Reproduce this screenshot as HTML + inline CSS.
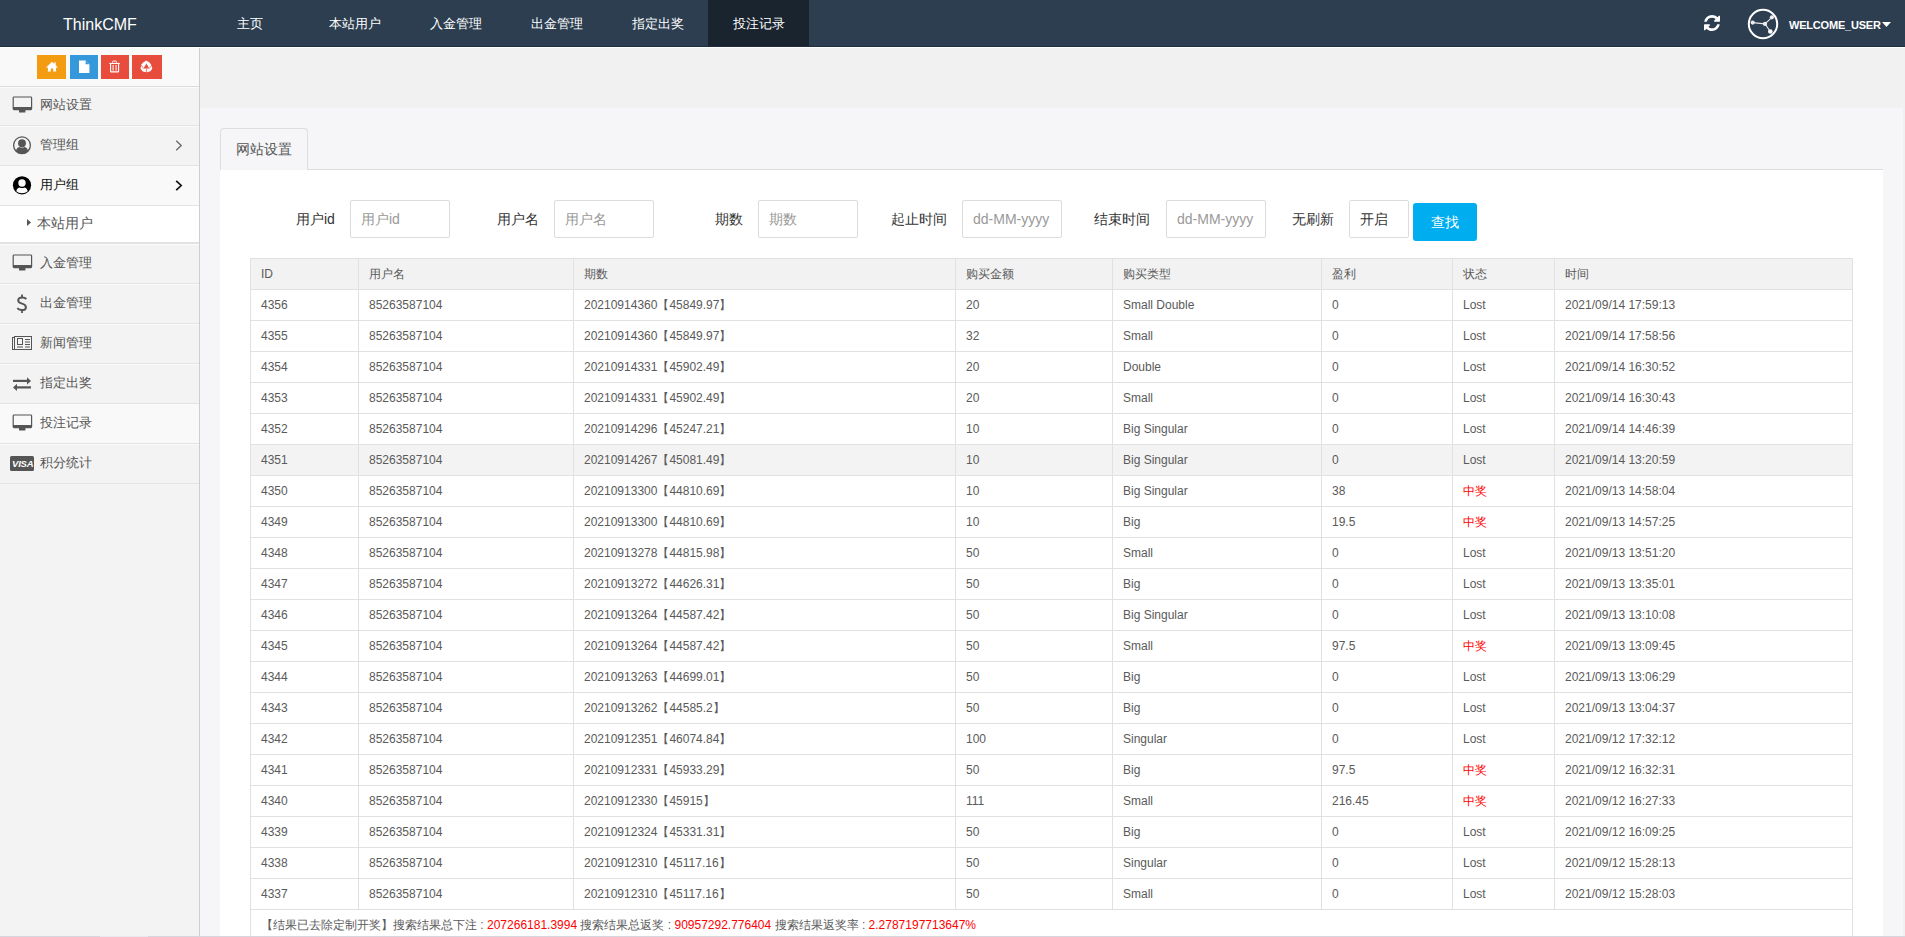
<!DOCTYPE html>
<html><head><meta charset="utf-8">
<style>
*{box-sizing:border-box}
html,body{margin:0;padding:0;width:1905px;height:937px;overflow:hidden;background:#f1f1f1;font-family:"Liberation Sans",sans-serif}
div,span,svg{position:absolute}
#nav{left:0;top:0;width:1905px;height:47px;background:#2c3e50;border-bottom:1px solid #1f2d3e}
.brand{left:63px;top:15px;font-size:16px;color:#fff;line-height:20px;white-space:nowrap}
.ni{top:0;height:46px;line-height:47px;color:#fff;font-size:13px;white-space:nowrap}
#side{left:0;top:48px;width:199px;height:888px;background:#f3f3f3}
.mi{left:0;width:199px;height:40px;border-bottom:1px solid #e2e2e2;background:#f3f3f3}
.mt{left:40px;top:11px;font-size:13px;line-height:16px;color:#555;white-space:nowrap}
.sb{top:55px;height:24px}
.c{font-size:12px;line-height:14px;color:#5a5a5a;white-space:nowrap}
.hl{height:1px;background:#e1e1e1}
.vl{width:1px;background:#e1e1e1}
.lab{font-size:14px;line-height:16px;color:#333;white-space:nowrap}
.inp{top:200px;height:38px;border:1px solid #dcdcdc;border-radius:2px;background:#fff}
.ph{font-size:14px;line-height:16px;color:#999;white-space:nowrap;top:10px;left:10px}
</style></head><body>

<div id="nav">
<div style="left:708px;top:0;width:101px;height:46px;background:#1a242f"></div>
<div class="brand">ThinkCMF</div>
<div class="ni" style="left:237px">主页</div>
<div class="ni" style="left:329px">本站用户</div>
<div class="ni" style="left:430px">入金管理</div>
<div class="ni" style="left:531px">出金管理</div>
<div class="ni" style="left:632px">指定出奖</div>
<div class="ni" style="left:733px">投注记录</div>
<svg style="left:1703.5px;top:14.5px" width="16" height="16" viewBox="0 0 1536 1536"><path fill="#fff" d="M1511 928q0 5-1 7-64 268-268 434.5T764 1536q-146 0-282.5-55T238 1324l-129 128q-19 19-45 19t-45-19-19-45V960q0-26 19-45t45-19h448q26 0 45 19t19 45-19 45l-137 137q71 66 161 102t187 36q134 0 250-65t186-179q11-17 53-117 8-23 30-23h192q13 0 22.5 9.5t9.5 22.5zm25-800v448q0 26-19 45t-45 19h-448q-26 0-45-19t-19-45 19-45l138-138Q969 256 768 256q-134 0-250 65T332 500q-11 17-53 117-8 23-30 23H50q-13 0-22.5-9.5T18 608v-7q65-268 270-434.5T768 0q146 0 284 55.5T1297 212l130-129q19-19 45-19t45 19 19 45z"/></svg>
<svg style="left:1747px;top:8px" width="32" height="32" viewBox="0 0 32 32"><circle cx="16" cy="16" r="14.2" fill="none" stroke="#fff" stroke-width="2"/><path d="M5.7 14.6L18 15.9L24.9 9.3M18 15.9L23.3 23.5" stroke="#e8e8e8" stroke-width="1.1" fill="none"/><circle cx="5.7" cy="14.6" r="2.1" fill="#eee"/><circle cx="18" cy="15.9" r="2.1" fill="#eee"/><circle cx="24.9" cy="9.3" r="2.1" fill="#eee"/><circle cx="23.3" cy="23.5" r="2.3" fill="#fff"/></svg>
<div style="left:1789px;top:19px;font-size:11px;line-height:12px;color:#fff;font-weight:bold;white-space:nowrap;letter-spacing:-0.2px">WELCOME_USER</div>
<svg style="left:1882px;top:22px" width="9" height="5" viewBox="0 0 9 5"><path d="M0 0H9L4.5 5z" fill="#fff"/></svg>
</div>
<div style="left:0;top:47px;width:1905px;height:1px;background:#fff"></div>
<div id="side">
<div style="left:0;top:0;width:199px;height:39px;background:#f9f9f9;border-bottom:1px solid #e2e2e2"></div>
</div>
<div style="left:199px;top:48px;width:1px;height:888px;background:#cdcdcd"></div>
<div class="sb" style="left:37px;width:29px;background:#f39c12"></div>
<div class="sb" style="left:70px;width:28px;background:#3498db"></div>
<div class="sb" style="left:101px;width:28px;background:#e74c3c"></div>
<div class="sb" style="left:132px;width:30px;background:#e74c3c"></div>
<svg style="left:46px;top:61px" width="12" height="11" viewBox="0 0 12 11"><path d="M6 0.8L0.3 6.2L1 6.9L1.9 6V10.4H4.8V7.6H7.2V10.4H10.1V6L11 6.9L11.7 6.2L9.7 4.3V1.2H8.3V3L6 0.8z" fill="#fff"/></svg>
<svg style="left:78px;top:60px" width="12" height="14" viewBox="0 0 12 14"><path d="M1 0.6H7.6L11.4 4.3V13H1z" fill="#fff"/><path d="M7.6 0.6V4.3H11.4" fill="#3498db"/></svg>
<svg style="left:109px;top:60px" width="12" height="13" viewBox="0 0 12 13"><path d="M3.6 2.6V1.9Q3.6 1 4.5 1H6.6Q7.5 1 7.5 1.9V2.6" fill="none" stroke="#fff" stroke-width="1"/><path d="M0.4 2.9H10.8V4H0.4z" fill="#fff"/><path d="M1.6 4V11.4Q1.6 11.9 2.1 11.9H9.1Q9.6 11.9 9.6 11.4V4" fill="none" stroke="#fff" stroke-width="1.1"/><path d="M4.1 5V10.6M7.1 5V10.6" stroke="#fff" stroke-width="1"/></svg>
<svg style="left:140px;top:60px" width="13" height="13" viewBox="0 0 13 13"><path d="M6.3 0.5L9.6 2.4L11.6 5.6L12.3 8.4L10.4 11.2L6.8 12.3L2.8 11.6L0.6 8.8L1.2 4.6L3.4 2.2z M6.4 3.6L3.5 8.6H9.3z" fill="#fff" fill-rule="evenodd"/><path d="M6.4 8.6V12.4M3.5 8.6L1 5M9.3 8.6L11.9 5" stroke="#e74c3c" stroke-width="0.7"/></svg>
<div style="left:0;top:86px;width:199px;height:1px;background:#dcdcdc"></div>
<div style="left:0;top:87px;width:199px;height:39px;background:#f3f3f3;border-top:1px solid #fafafa;border-bottom:1px solid #e3e3e3"></div>
<div class="mt" style="top:97px;color:#555">网站设置</div>
<div style="left:0;top:126px;width:199px;height:40px;background:#f3f3f3;border-top:1px solid #fafafa;border-bottom:1px solid #e3e3e3"></div>
<div class="mt" style="top:137px;color:#555">管理组</div>
<div style="left:0;top:166px;width:199px;height:40px;background:#f9f9f9;border-top:1px solid #fafafa;border-bottom:1px solid #e3e3e3"></div>
<div class="mt" style="top:177px;color:#111">用户组</div>
<div style="left:0;top:244px;width:199px;height:40px;background:#f3f3f3;border-top:1px solid #fafafa;border-bottom:1px solid #e3e3e3"></div>
<div class="mt" style="top:255px;color:#555">入金管理</div>
<div style="left:0;top:284px;width:199px;height:40px;background:#f3f3f3;border-top:1px solid #fafafa;border-bottom:1px solid #e3e3e3"></div>
<div class="mt" style="top:295px;color:#555">出金管理</div>
<div style="left:0;top:324px;width:199px;height:40px;background:#f3f3f3;border-top:1px solid #fafafa;border-bottom:1px solid #e3e3e3"></div>
<div class="mt" style="top:335px;color:#555">新闻管理</div>
<div style="left:0;top:364px;width:199px;height:40px;background:#f3f3f3;border-top:1px solid #fafafa;border-bottom:1px solid #e3e3e3"></div>
<div class="mt" style="top:375px;color:#555">指定出奖</div>
<div style="left:0;top:404px;width:199px;height:40px;background:#f9f9f9;border-top:1px solid #fafafa;border-bottom:1px solid #e3e3e3"></div>
<div class="mt" style="top:415px;color:#555">投注记录</div>
<div style="left:0;top:444px;width:199px;height:40px;background:#f3f3f3;border-top:1px solid #fafafa;border-bottom:1px solid #e3e3e3"></div>
<div class="mt" style="top:455px;color:#555">积分统计</div>
<div style="left:0;top:206px;width:199px;height:38px;background:#fff;border-bottom:2px solid #e2e2e2"></div>
<svg style="left:27px;top:219px" width="4" height="7" viewBox="0 0 4 7"><path d="M0 0L4 3.5L0 7z" fill="#555"/></svg>
<div style="left:37px;top:215px;font-size:14px;line-height:16px;color:#555;white-space:nowrap">本站用户</div>
<svg style="left:12px;top:96px" width="21" height="18" viewBox="0 0 21 18"><path d="M2 0.4H18.8Q20.2 0.4 20.2 1.8V12.6Q20.2 14.2 18.8 14.2H2Q0.6 14.2 0.6 12.6V1.8Q0.6 0.4 2 0.4z M1.8 1.6V10.9H19V1.6z" fill="#555" fill-rule="evenodd"/><path d="M7 14H13.4V16.5H7z" fill="#555"/></svg>
<svg style="left:12px;top:254px" width="21" height="18" viewBox="0 0 21 18"><path d="M2 0.4H18.8Q20.2 0.4 20.2 1.8V12.6Q20.2 14.2 18.8 14.2H2Q0.6 14.2 0.6 12.6V1.8Q0.6 0.4 2 0.4z M1.8 1.6V10.9H19V1.6z" fill="#555" fill-rule="evenodd"/><path d="M7 14H13.4V16.5H7z" fill="#555"/></svg>
<svg style="left:12px;top:414px" width="21" height="18" viewBox="0 0 21 18"><path d="M2 0.4H18.8Q20.2 0.4 20.2 1.8V12.6Q20.2 14.2 18.8 14.2H2Q0.6 14.2 0.6 12.6V1.8Q0.6 0.4 2 0.4z M1.8 1.6V10.9H19V1.6z" fill="#555" fill-rule="evenodd"/><path d="M7 14H13.4V16.5H7z" fill="#555"/></svg>
<svg style="left:12px;top:135px" width="20" height="20" viewBox="0 0 20 20"><circle cx="10" cy="10.3" r="8.4" fill="none" stroke="#555" stroke-width="1.3"/><circle cx="10" cy="8.2" r="3.9" fill="#555"/><path d="M3.9 16.2Q4.6 12.2 7.3 11.9Q10 13 12.7 11.9Q15.4 12.2 16.1 16.2Q13.5 18.7 10 18.7Q6.5 18.7 3.9 16.2z" fill="#555"/></svg>
<svg style="left:12px;top:175px" width="20" height="20" viewBox="0 0 20 20"><circle cx="10" cy="10.3" r="9.1" fill="#000"/><circle cx="10" cy="8" r="3.7" fill="#fafafa"/><path d="M4.3 16.3Q4.9 12.8 7.4 12.4Q10 13.6 12.6 12.4Q15.1 12.8 15.7 16.3Q13.5 18.2 10 18.2Q6.5 18.2 4.3 16.3z" fill="#fafafa"/></svg>
<svg style="left:175px;top:140px" width="8" height="11" viewBox="0 0 8 11"><path d="M1.2 0.8L6.2 5.5L1.2 10.2" fill="none" stroke="#666" stroke-width="1.3"/></svg>
<svg style="left:175px;top:180px" width="8" height="11" viewBox="0 0 8 11"><path d="M1.2 0.8L6.2 5.5L1.2 10.2" fill="none" stroke="#111" stroke-width="1.7"/></svg>
<svg style="left:16px;top:294px" width="12" height="20" viewBox="0 0 12 20"><path d="M6 0.4V3.2M6 16.2V19" stroke="#555" stroke-width="1.8"/><path d="M10.3 5Q9 3.4 6.2 3.4Q2.2 3.4 2.2 6.6Q2.2 8.7 6 9.6Q9.9 10.6 9.9 13.2Q9.9 16.1 6 16.1Q3 16.1 1.3 14.2" fill="none" stroke="#555" stroke-width="2"/></svg>
<svg style="left:11px;top:335px" width="22" height="16" viewBox="0 0 22 16" fill="#555"><rect x="3" y="1" width="18" height="1"/><rect x="20" y="1" width="1" height="14"/><rect x="1" y="14" width="20" height="1"/><rect x="3" y="1" width="1" height="14"/><rect x="1" y="2" width="1" height="13"/><rect x="1" y="2" width="2" height="1"/><rect x="6" y="3" width="6" height="1"/><rect x="6" y="9" width="6" height="1"/><rect x="6" y="3" width="1" height="7"/><rect x="11" y="3" width="1" height="7"/><rect x="14" y="4" width="5" height="1"/><rect x="14" y="6.5" width="5" height="1"/><rect x="14" y="9" width="5" height="1"/><rect x="6" y="11.5" width="6" height="1"/><rect x="14" y="11.5" width="5" height="1"/></svg>
<svg style="left:12px;top:376px" width="20" height="16" viewBox="0 0 20 16"><path d="M1 4.9H16" stroke="#555" stroke-width="2.2"/><path d="M15 1.3L19 4.9L15 8.5z" fill="#555"/><path d="M4 11.4H19" stroke="#555" stroke-width="2.2"/><path d="M5 7.8L1 11.4L5 15z" fill="#555"/></svg>
<div style="left:10px;top:456px;width:24px;height:15px;background:#555;border-radius:1.5px"></div>
<div style="left:12px;top:457px;font-size:9.5px;line-height:13px;color:#fff;font-weight:bold;font-style:italic;letter-spacing:-0.2px">VISA</div>
<div style="left:200px;top:108px;width:1703px;height:828px;background:#f6f6f8"></div>
<div style="left:220px;top:128px;width:88px;height:43px;border:1px solid #ddd;border-bottom:none;border-radius:4px 4px 0 0;background:#f6f6f8"></div>
<div style="left:236px;top:141px;font-size:14px;line-height:16px;color:#555;white-space:nowrap">网站设置</div>
<div style="left:307px;top:169px;width:1576px;height:1px;background:#ddd"></div>
<div style="left:220px;top:170px;width:1663px;height:766px;background:#fff"></div>
<div class="lab" style="left:296px;top:211px">用户id</div>
<div class="inp" style="left:350px;width:100px"><div class="ph" style="color:#999">用户id</div></div>
<div class="lab" style="left:497px;top:211px">用户名</div>
<div class="inp" style="left:554px;width:100px"><div class="ph" style="color:#999">用户名</div></div>
<div class="lab" style="left:715px;top:211px">期数</div>
<div class="inp" style="left:758px;width:100px"><div class="ph" style="color:#999">期数</div></div>
<div class="lab" style="left:891px;top:211px">起止时间</div>
<div class="inp" style="left:962px;width:100px"><div class="ph" style="color:#999">dd-MM-yyyy</div></div>
<div class="lab" style="left:1094px;top:211px">结束时间</div>
<div class="inp" style="left:1166px;width:100px"><div class="ph" style="color:#999">dd-MM-yyyy</div></div>
<div class="lab" style="left:1292px;top:211px">无刷新</div>
<div class="inp" style="left:1349px;width:60px"><div class="ph" style="color:#333">开启</div></div>
<div style="left:1413px;top:203px;width:64px;height:38px;background:#00aeef;border-radius:3px"></div>
<div style="left:1431px;top:214px;font-size:14px;line-height:16px;color:#fff;white-space:nowrap">查找</div>
<div style="left:251px;top:259px;width:1601px;height:30px;background:#f2f2f2"></div>
<div style="left:251px;top:445px;width:1601px;height:30px;background:#f3f3f3"></div>
<div class="hl" style="left:250px;top:258px;width:1603px"></div>
<div class="hl" style="left:250px;top:289px;width:1603px"></div>
<div class="hl" style="left:250px;top:320px;width:1603px"></div>
<div class="hl" style="left:250px;top:351px;width:1603px"></div>
<div class="hl" style="left:250px;top:382px;width:1603px"></div>
<div class="hl" style="left:250px;top:413px;width:1603px"></div>
<div class="hl" style="left:250px;top:444px;width:1603px"></div>
<div class="hl" style="left:250px;top:475px;width:1603px"></div>
<div class="hl" style="left:250px;top:506px;width:1603px"></div>
<div class="hl" style="left:250px;top:537px;width:1603px"></div>
<div class="hl" style="left:250px;top:568px;width:1603px"></div>
<div class="hl" style="left:250px;top:599px;width:1603px"></div>
<div class="hl" style="left:250px;top:630px;width:1603px"></div>
<div class="hl" style="left:250px;top:661px;width:1603px"></div>
<div class="hl" style="left:250px;top:692px;width:1603px"></div>
<div class="hl" style="left:250px;top:723px;width:1603px"></div>
<div class="hl" style="left:250px;top:754px;width:1603px"></div>
<div class="hl" style="left:250px;top:785px;width:1603px"></div>
<div class="hl" style="left:250px;top:816px;width:1603px"></div>
<div class="hl" style="left:250px;top:847px;width:1603px"></div>
<div class="hl" style="left:250px;top:878px;width:1603px"></div>
<div class="hl" style="left:250px;top:909px;width:1603px"></div>
<div class="vl" style="left:250px;top:258px;height:679px"></div>
<div class="vl" style="left:358px;top:258px;height:651px"></div>
<div class="vl" style="left:573px;top:258px;height:651px"></div>
<div class="vl" style="left:955px;top:258px;height:651px"></div>
<div class="vl" style="left:1112px;top:258px;height:651px"></div>
<div class="vl" style="left:1321px;top:258px;height:651px"></div>
<div class="vl" style="left:1452px;top:258px;height:651px"></div>
<div class="vl" style="left:1554px;top:258px;height:651px"></div>
<div class="vl" style="left:1852px;top:258px;height:679px"></div>
<div class="c" style="left:261px;top:267px">ID</div>
<div class="c" style="left:369px;top:267px">用户名</div>
<div class="c" style="left:584px;top:267px">期数</div>
<div class="c" style="left:966px;top:267px">购买金额</div>
<div class="c" style="left:1123px;top:267px">购买类型</div>
<div class="c" style="left:1332px;top:267px">盈利</div>
<div class="c" style="left:1463px;top:267px">状态</div>
<div class="c" style="left:1565px;top:267px">时间</div>
<div class="c" style="left:261px;top:298px">4356</div>
<div class="c" style="left:369px;top:298px">85263587104</div>
<div class="c" style="left:584px;top:298px">20210914360【45849.97】</div>
<div class="c" style="left:966px;top:298px">20</div>
<div class="c" style="left:1123px;top:298px">Small Double</div>
<div class="c" style="left:1332px;top:298px">0</div>
<div class="c" style="left:1463px;top:298px">Lost</div>
<div class="c" style="left:1565px;top:298px">2021/09/14 17:59:13</div>
<div class="c" style="left:261px;top:329px">4355</div>
<div class="c" style="left:369px;top:329px">85263587104</div>
<div class="c" style="left:584px;top:329px">20210914360【45849.97】</div>
<div class="c" style="left:966px;top:329px">32</div>
<div class="c" style="left:1123px;top:329px">Small</div>
<div class="c" style="left:1332px;top:329px">0</div>
<div class="c" style="left:1463px;top:329px">Lost</div>
<div class="c" style="left:1565px;top:329px">2021/09/14 17:58:56</div>
<div class="c" style="left:261px;top:360px">4354</div>
<div class="c" style="left:369px;top:360px">85263587104</div>
<div class="c" style="left:584px;top:360px">20210914331【45902.49】</div>
<div class="c" style="left:966px;top:360px">20</div>
<div class="c" style="left:1123px;top:360px">Double</div>
<div class="c" style="left:1332px;top:360px">0</div>
<div class="c" style="left:1463px;top:360px">Lost</div>
<div class="c" style="left:1565px;top:360px">2021/09/14 16:30:52</div>
<div class="c" style="left:261px;top:391px">4353</div>
<div class="c" style="left:369px;top:391px">85263587104</div>
<div class="c" style="left:584px;top:391px">20210914331【45902.49】</div>
<div class="c" style="left:966px;top:391px">20</div>
<div class="c" style="left:1123px;top:391px">Small</div>
<div class="c" style="left:1332px;top:391px">0</div>
<div class="c" style="left:1463px;top:391px">Lost</div>
<div class="c" style="left:1565px;top:391px">2021/09/14 16:30:43</div>
<div class="c" style="left:261px;top:422px">4352</div>
<div class="c" style="left:369px;top:422px">85263587104</div>
<div class="c" style="left:584px;top:422px">20210914296【45247.21】</div>
<div class="c" style="left:966px;top:422px">10</div>
<div class="c" style="left:1123px;top:422px">Big Singular</div>
<div class="c" style="left:1332px;top:422px">0</div>
<div class="c" style="left:1463px;top:422px">Lost</div>
<div class="c" style="left:1565px;top:422px">2021/09/14 14:46:39</div>
<div class="c" style="left:261px;top:453px">4351</div>
<div class="c" style="left:369px;top:453px">85263587104</div>
<div class="c" style="left:584px;top:453px">20210914267【45081.49】</div>
<div class="c" style="left:966px;top:453px">10</div>
<div class="c" style="left:1123px;top:453px">Big Singular</div>
<div class="c" style="left:1332px;top:453px">0</div>
<div class="c" style="left:1463px;top:453px">Lost</div>
<div class="c" style="left:1565px;top:453px">2021/09/14 13:20:59</div>
<div class="c" style="left:261px;top:484px">4350</div>
<div class="c" style="left:369px;top:484px">85263587104</div>
<div class="c" style="left:584px;top:484px">20210913300【44810.69】</div>
<div class="c" style="left:966px;top:484px">10</div>
<div class="c" style="left:1123px;top:484px">Big Singular</div>
<div class="c" style="left:1332px;top:484px">38</div>
<div class="c" style="left:1463px;top:484px;color:#f00">中奖</div>
<div class="c" style="left:1565px;top:484px">2021/09/13 14:58:04</div>
<div class="c" style="left:261px;top:515px">4349</div>
<div class="c" style="left:369px;top:515px">85263587104</div>
<div class="c" style="left:584px;top:515px">20210913300【44810.69】</div>
<div class="c" style="left:966px;top:515px">10</div>
<div class="c" style="left:1123px;top:515px">Big</div>
<div class="c" style="left:1332px;top:515px">19.5</div>
<div class="c" style="left:1463px;top:515px;color:#f00">中奖</div>
<div class="c" style="left:1565px;top:515px">2021/09/13 14:57:25</div>
<div class="c" style="left:261px;top:546px">4348</div>
<div class="c" style="left:369px;top:546px">85263587104</div>
<div class="c" style="left:584px;top:546px">20210913278【44815.98】</div>
<div class="c" style="left:966px;top:546px">50</div>
<div class="c" style="left:1123px;top:546px">Small</div>
<div class="c" style="left:1332px;top:546px">0</div>
<div class="c" style="left:1463px;top:546px">Lost</div>
<div class="c" style="left:1565px;top:546px">2021/09/13 13:51:20</div>
<div class="c" style="left:261px;top:577px">4347</div>
<div class="c" style="left:369px;top:577px">85263587104</div>
<div class="c" style="left:584px;top:577px">20210913272【44626.31】</div>
<div class="c" style="left:966px;top:577px">50</div>
<div class="c" style="left:1123px;top:577px">Big</div>
<div class="c" style="left:1332px;top:577px">0</div>
<div class="c" style="left:1463px;top:577px">Lost</div>
<div class="c" style="left:1565px;top:577px">2021/09/13 13:35:01</div>
<div class="c" style="left:261px;top:608px">4346</div>
<div class="c" style="left:369px;top:608px">85263587104</div>
<div class="c" style="left:584px;top:608px">20210913264【44587.42】</div>
<div class="c" style="left:966px;top:608px">50</div>
<div class="c" style="left:1123px;top:608px">Big Singular</div>
<div class="c" style="left:1332px;top:608px">0</div>
<div class="c" style="left:1463px;top:608px">Lost</div>
<div class="c" style="left:1565px;top:608px">2021/09/13 13:10:08</div>
<div class="c" style="left:261px;top:639px">4345</div>
<div class="c" style="left:369px;top:639px">85263587104</div>
<div class="c" style="left:584px;top:639px">20210913264【44587.42】</div>
<div class="c" style="left:966px;top:639px">50</div>
<div class="c" style="left:1123px;top:639px">Small</div>
<div class="c" style="left:1332px;top:639px">97.5</div>
<div class="c" style="left:1463px;top:639px;color:#f00">中奖</div>
<div class="c" style="left:1565px;top:639px">2021/09/13 13:09:45</div>
<div class="c" style="left:261px;top:670px">4344</div>
<div class="c" style="left:369px;top:670px">85263587104</div>
<div class="c" style="left:584px;top:670px">20210913263【44699.01】</div>
<div class="c" style="left:966px;top:670px">50</div>
<div class="c" style="left:1123px;top:670px">Big</div>
<div class="c" style="left:1332px;top:670px">0</div>
<div class="c" style="left:1463px;top:670px">Lost</div>
<div class="c" style="left:1565px;top:670px">2021/09/13 13:06:29</div>
<div class="c" style="left:261px;top:701px">4343</div>
<div class="c" style="left:369px;top:701px">85263587104</div>
<div class="c" style="left:584px;top:701px">20210913262【44585.2】</div>
<div class="c" style="left:966px;top:701px">50</div>
<div class="c" style="left:1123px;top:701px">Big</div>
<div class="c" style="left:1332px;top:701px">0</div>
<div class="c" style="left:1463px;top:701px">Lost</div>
<div class="c" style="left:1565px;top:701px">2021/09/13 13:04:37</div>
<div class="c" style="left:261px;top:732px">4342</div>
<div class="c" style="left:369px;top:732px">85263587104</div>
<div class="c" style="left:584px;top:732px">20210912351【46074.84】</div>
<div class="c" style="left:966px;top:732px">100</div>
<div class="c" style="left:1123px;top:732px">Singular</div>
<div class="c" style="left:1332px;top:732px">0</div>
<div class="c" style="left:1463px;top:732px">Lost</div>
<div class="c" style="left:1565px;top:732px">2021/09/12 17:32:12</div>
<div class="c" style="left:261px;top:763px">4341</div>
<div class="c" style="left:369px;top:763px">85263587104</div>
<div class="c" style="left:584px;top:763px">20210912331【45933.29】</div>
<div class="c" style="left:966px;top:763px">50</div>
<div class="c" style="left:1123px;top:763px">Big</div>
<div class="c" style="left:1332px;top:763px">97.5</div>
<div class="c" style="left:1463px;top:763px;color:#f00">中奖</div>
<div class="c" style="left:1565px;top:763px">2021/09/12 16:32:31</div>
<div class="c" style="left:261px;top:794px">4340</div>
<div class="c" style="left:369px;top:794px">85263587104</div>
<div class="c" style="left:584px;top:794px">20210912330【45915】</div>
<div class="c" style="left:966px;top:794px">111</div>
<div class="c" style="left:1123px;top:794px">Small</div>
<div class="c" style="left:1332px;top:794px">216.45</div>
<div class="c" style="left:1463px;top:794px;color:#f00">中奖</div>
<div class="c" style="left:1565px;top:794px">2021/09/12 16:27:33</div>
<div class="c" style="left:261px;top:825px">4339</div>
<div class="c" style="left:369px;top:825px">85263587104</div>
<div class="c" style="left:584px;top:825px">20210912324【45331.31】</div>
<div class="c" style="left:966px;top:825px">50</div>
<div class="c" style="left:1123px;top:825px">Big</div>
<div class="c" style="left:1332px;top:825px">0</div>
<div class="c" style="left:1463px;top:825px">Lost</div>
<div class="c" style="left:1565px;top:825px">2021/09/12 16:09:25</div>
<div class="c" style="left:261px;top:856px">4338</div>
<div class="c" style="left:369px;top:856px">85263587104</div>
<div class="c" style="left:584px;top:856px">20210912310【45117.16】</div>
<div class="c" style="left:966px;top:856px">50</div>
<div class="c" style="left:1123px;top:856px">Singular</div>
<div class="c" style="left:1332px;top:856px">0</div>
<div class="c" style="left:1463px;top:856px">Lost</div>
<div class="c" style="left:1565px;top:856px">2021/09/12 15:28:13</div>
<div class="c" style="left:261px;top:887px">4337</div>
<div class="c" style="left:369px;top:887px">85263587104</div>
<div class="c" style="left:584px;top:887px">20210912310【45117.16】</div>
<div class="c" style="left:966px;top:887px">50</div>
<div class="c" style="left:1123px;top:887px">Small</div>
<div class="c" style="left:1332px;top:887px">0</div>
<div class="c" style="left:1463px;top:887px">Lost</div>
<div class="c" style="left:1565px;top:887px">2021/09/12 15:28:03</div>
<div class="c" style="left:261px;top:918px">【结果已去除定制开奖】搜索结果总下注 : <span style="position:static;color:#f00">207266181.3994</span> 搜索结果总返奖 : <span style="position:static;color:#f00">90957292.776404</span> 搜索结果返奖率 : <span style="position:static;color:#f00">2.2787197713647%</span></div>
<div style="left:0;top:936px;width:1905px;height:1px;background:#d6d6de"></div>
<div style="left:100px;top:936px;width:48px;height:1px;background:#e8e8ee"></div>
</body></html>
